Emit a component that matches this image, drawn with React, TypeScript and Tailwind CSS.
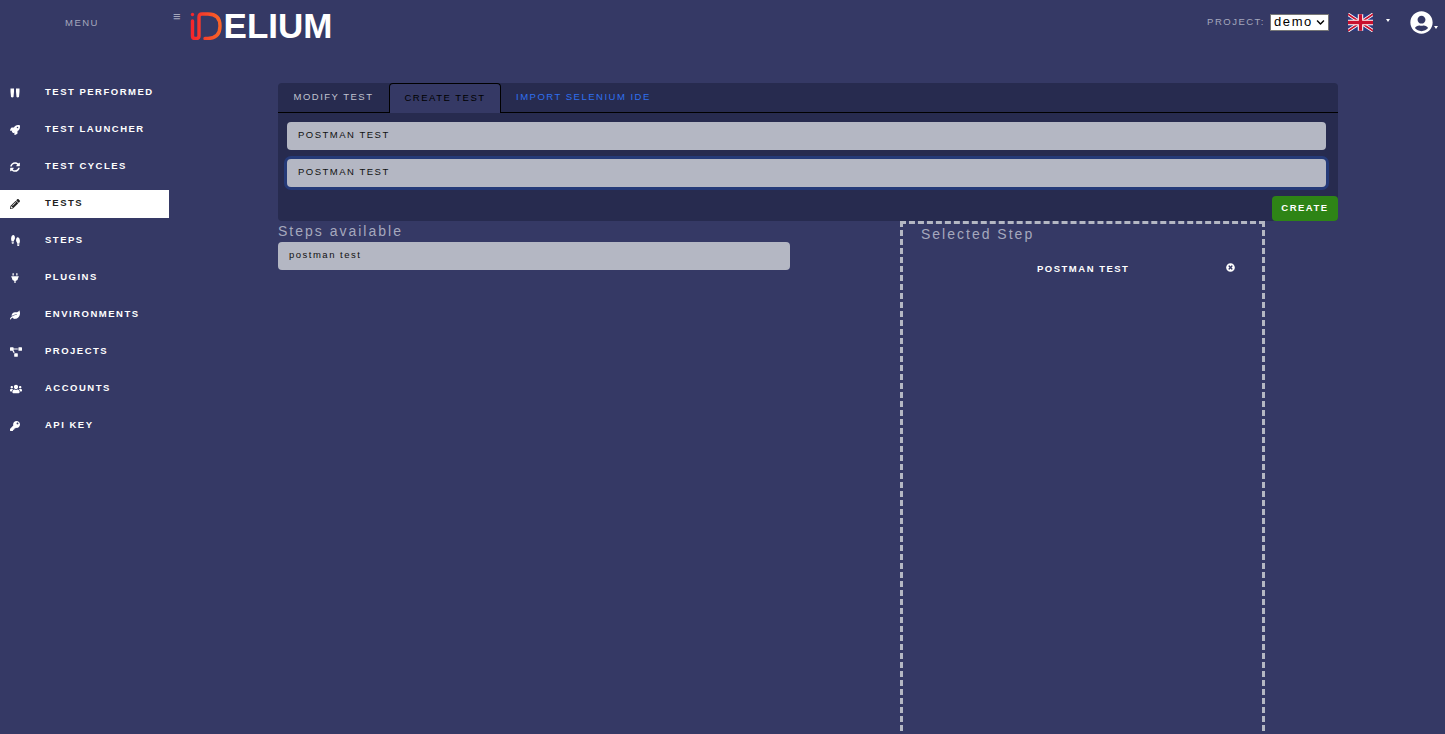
import type { ReactNode } from "react";
import { FaChevronDown, FaKey, FaLeaf, FaPencilAlt, FaPlug, FaProjectDiagram, FaRocket, FaShoePrints, FaSyncAlt, FaTimesCircle, FaUserCircle, FaUsers } from "react-icons/fa";

function PerformedIcon() {
    return (
        <svg viewBox="0 0 10 10" className="h-[10px] w-[10px]" fill="currentColor">
            <path d="M0.5 0.5h3.5v3.2l-0.5 5.3q-1.2 0.8-2.5 0l-0.5-5.3zM6 0.5h3.5v3.2l-0.5 5.3q-1.2 0.8-2.5 0l-0.5-5.3z" />
        </svg>
    );
}

function UkFlag() {
    return (
        <svg viewBox="0 0 60 40" className="h-[19px] w-[25px]">
            <rect width="60" height="40" fill="#2b3a80" />
            <path d="M0 0L60 40M60 0L0 40" stroke="#fff" strokeWidth="8" />
            <path d="M0 0L60 40M60 0L0 40" stroke="#c8102e" strokeWidth="4" />
            <path d="M30 0V40M0 20H60" stroke="#fff" strokeWidth="13" />
            <path d="M30 0V40M0 20H60" stroke="#c8102e" strokeWidth="8" />
        </svg>
    );
}

function LogoMark() {
    return (
        <svg viewBox="0 0 33 28" className="h-[28px] w-[33px]" fill="none" strokeWidth="3.4" strokeLinecap="round">
            <defs>
                <linearGradient id="logoGrad" x1="0" y1="0" x2="1" y2="0">
                    <stop offset="0" stopColor="#f5262c" />
                    <stop offset="1" stopColor="#f86428" />
                </linearGradient>
            </defs>
            <path d="M2.5 2.4V2.6" stroke="#f5262c" />
            <path d="M2.5 9V24q0 2.5 2.5 2.5h1.5q2.5 0 2.5-2.5V5q0-3 3-3h6q12 0 12 12t-12 12.5h-3" stroke="url(#logoGrad)" />
        </svg>
    );
}

const navItems: { label: string; icon: ReactNode; active?: boolean }[] = [
    { label: "TEST PERFORMED", icon: <PerformedIcon /> },
    { label: "TEST LAUNCHER", icon: <FaRocket /> },
    { label: "TEST CYCLES", icon: <FaSyncAlt /> },
    { label: "TESTS", icon: <FaPencilAlt />, active: true },
    { label: "STEPS", icon: <FaShoePrints className="-rotate-90 text-[11px]" /> },
    { label: "PLUGINS", icon: <FaPlug /> },
    { label: "ENVIRONMENTS", icon: <FaLeaf /> },
    { label: "PROJECTS", icon: <FaProjectDiagram className="text-[12px]" /> },
    { label: "ACCOUNTS", icon: <FaUsers className="text-[12px]" /> },
    { label: "API KEY", icon: <FaKey /> },
];

export default function App() {
    return (
        <div className="flex h-[734px] flex-col overflow-hidden bg-[#353965] font-['Liberation_Sans',Arial,sans-serif] text-[9.5px] tracking-[1.5px]">
            <header className="flex h-[79px] shrink-0 items-start">
                <div className="flex w-[169px] shrink-0 justify-center pt-[16px] text-[#a5a8bd]">
                    <span className="mr-[5px]">MENU</span>
                </div>
                <div className="flex items-start pl-[4px] pt-[12px]">
                    <span className="text-[13px] leading-[10px] tracking-normal text-[#a5a8bd]">≡</span>
                    <div className="ml-[9px] flex items-center">
                        <LogoMark />
                        <span className="ml-[1px] text-[35px] font-bold leading-[28px] tracking-normal text-white">ELIUM</span>
                    </div>
                </div>
                <div className="ml-auto flex items-center pr-[7px] pt-[11px]">
                    <span className="text-[#a5a8bd]">PROJECT:</span>
                    <div className="relative ml-[5px]">
                        <select
                            defaultValue="demo"
                            className="block h-[17px] w-[59px] appearance-none border border-[#777] bg-white pb-[2px] pl-[3px] text-[13px] leading-[14px] tracking-[1.6px] text-black outline-none"
                        >
                            <option value="demo">demo</option>
                        </select>
                        <FaChevronDown className="absolute right-[4px] top-[4px] text-[9px] text-black" />
                    </div>
                    <span className="ml-[19px]"><UkFlag /></span>
                    <span className="ml-[13px] mb-[4px] h-0 w-0 border-x-[2.5px] border-t-[3px] border-x-transparent border-t-white" />
                    <FaUserCircle className="ml-[20px] text-[23px] text-white" />
                    <span className="mt-[10px] ml-[1px] h-0 w-0 border-x-[2.5px] border-t-[3px] border-x-transparent border-t-white" />
                </div>
            </header>

            <div className="flex min-h-0 flex-1">
                <nav className="flex w-[169px] shrink-0 flex-col gap-[9px] font-bold">
                    {navItems.map((item) => (
                        <div
                            key={item.label}
                            className={`flex h-[28px] items-center pb-[1px] ${item.active ? "bg-white text-[#222]" : "text-white"}`}
                        >
                            <span className="flex w-[45px] shrink-0 justify-start pl-[10px] text-[10px]">{item.icon}</span>
                            <span>{item.label}</span>
                        </div>
                    ))}
                </nav>

                <main className="ml-[109px] flex min-h-0 w-[1060px] flex-col pt-[4px]">
                    <section className="rounded-[4px] bg-[#272b4f]">
                        <div className="flex h-[30px] border-b border-black">
                            <span className="flex w-[111px] items-center justify-center text-[#c0c3cf]">MODIFY TEST</span>
                            <span className="flex h-[30px] w-[112px] items-center justify-center rounded-t-[4px] border border-b-0 border-black bg-[#353965] text-black">CREATE TEST</span>
                            <span className="flex items-center pl-[15px] text-[#2f70f0]">IMPORT SELENIUM IDE</span>
                        </div>
                        <div className="flex flex-col gap-[9px] pl-[9px] pr-[12px] pt-[9px]">
                            <div className="flex h-[28px] items-center rounded-[4px] bg-[#b4b7c3] pb-[2px] pl-[11px] text-[#111]">POSTMAN TEST</div>
                            <div className="flex h-[28px] items-center rounded-[4px] bg-[#b4b7c3] pb-[2px] pl-[11px] text-[#111] shadow-[0_0_0_3px_#253a78]">POSTMAN TEST</div>
                        </div>
                        <div className="mt-[9px] flex justify-end">
                            <button
                                type="button"
                                className="h-[25px] w-[66px] rounded-[4px] bg-[#2e8416] pb-[1px] font-bold text-white"
                            >
                                CREATE
                            </button>
                        </div>
                    </section>

                    <div className="flex min-h-0 flex-1">
                        <div className="w-[512px] shrink-0">
                            <h2 className="mt-[1px] text-[14px] leading-[19px] tracking-[2px] text-[#a5a8bd]">Steps available</h2>
                            <div className="mt-[1px] flex h-[28px] items-center rounded-[4px] bg-[#b4b7c3] pb-[2px] pl-[11px] text-[#111]">postman test</div>
                        </div>
                        <div className="ml-[110px] h-[600px] w-[365px] shrink-0 border-[3px] border-dashed border-[#b4b7c3] px-[18px] pt-[1px]">
                            <h2 className="text-[14px] leading-[19px] tracking-[2px] text-[#a5a8bd]">Selected Step</h2>
                            <div className="mt-[18px] flex items-center font-bold text-white">
                                <span className="ml-[116px]">POSTMAN TEST</span>
                                <FaTimesCircle className="ml-[97px] mb-[3px] text-[9px]" />
                            </div>
                        </div>
                    </div>
                </main>
            </div>
        </div>
    );
}
